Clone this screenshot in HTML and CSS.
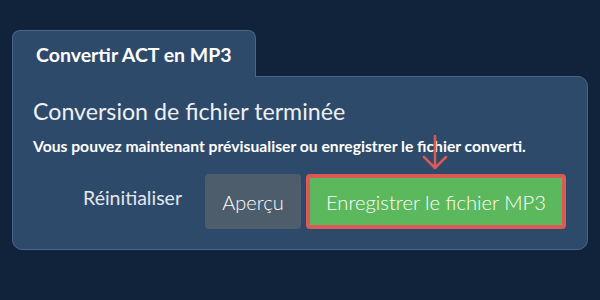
FILE: index.html
```html
<!DOCTYPE html>
<html lang="fr">
<head>
<meta charset="utf-8">
<link rel="stylesheet" href="styles.css">
</head>
<body>
<div class="wrap">
  <div class="tab">Convertir ACT en MP3</div>
  <div class="panel">
    <h1 class="title">Conversion de fichier terminée</h1>
    <p class="sub">Vous pouvez maintenant prévisualiser ou enregistrer le fichier converti.</p>
    <div class="actions">
      <button class="btn btn-link">Réinitialiser</button>
      <button class="btn btn-default">Aperçu</button>
      <div class="hl">
        <button class="btn btn-success">Enregistrer le fichier MP3</button>
        <svg class="arrow" width="28" height="36" viewBox="0 0 28 36">
          <path d="M14 1 V33 M3 22 L14 33 L25 22" fill="none" stroke="#dc5a55" stroke-width="2.5" stroke-linecap="round" stroke-linejoin="round"/>
        </svg>
      </div>
    </div>
  </div>
</div>
</body>
</html>
```

FILE: styles.css
```css
* { box-sizing: border-box; }
html, body { margin: 0; padding: 0; }
body {
  background: #11233a;
  font-family: Lato, "Open Sans", sans-serif;
  color: #ffffff;
  width: 600px;
  height: 300px;
  overflow: hidden;
}
.wrap {
  padding: 30px 12px 0 12px;
}
.tab {
  position: relative;
  z-index: 1;
  width: 244px;
  height: 47px;
  margin-bottom: -1px;
  background: #2e4a6b;
  border: 1px solid #4b6586;
  border-bottom: none;
  border-radius: 8px 8px 0 0;
  font-weight: 700;
  font-size: 19.5px;
  line-height: 24px;
  padding: 12px 0 0 23px;
  color: #ffffff;
}
.panel {
  background: #2e4a6b;
  border: 1px solid #4b6586;
  border-radius: 0 10px 10px 10px;
  height: 174px;
  padding: 20px 20px 0 20px;
}
.title {
  margin: 0;
  font-weight: 400;
  font-size: 23.2px;
  line-height: 28px;
  color: #eef0f2;
}
.sub {
  margin: 11px 0 0 0;
  font-weight: 700;
  font-size: 15.7px;
  line-height: 20px;
  color: #ffffff;
}
.actions {
  display: flex;
  justify-content: flex-end;
  align-items: center;
  margin-top: 18px;
  gap: 5px;
  padding-right: 1px;
}
.btn {
  font-family: Lato, "Open Sans", sans-serif;
  color: #ffffff;
  border: none;
  height: 55px;
  font-size: 20px;
  font-weight: 300;
  border-radius: 4px;
  cursor: pointer;
  padding: 0;
}
.btn-link {
  background: transparent;
  color: #e3e7ec;
  padding: 0 0 8px 0;
  margin-right: 18px;
  font-size: 19.5px;
  font-weight: 400;
}
.btn-default {
  background: #4e5d6c;
  width: 96px;
}
.hl {
  position: relative;
}
.btn-success {
  background: #5cb85c;
  border: 4px solid #dc5a55;
  width: 260px;
  font-size: 20.2px;
  display: block;
}
.arrow {
  position: absolute;
  left: 115px;
  top: -39px;
}
```
